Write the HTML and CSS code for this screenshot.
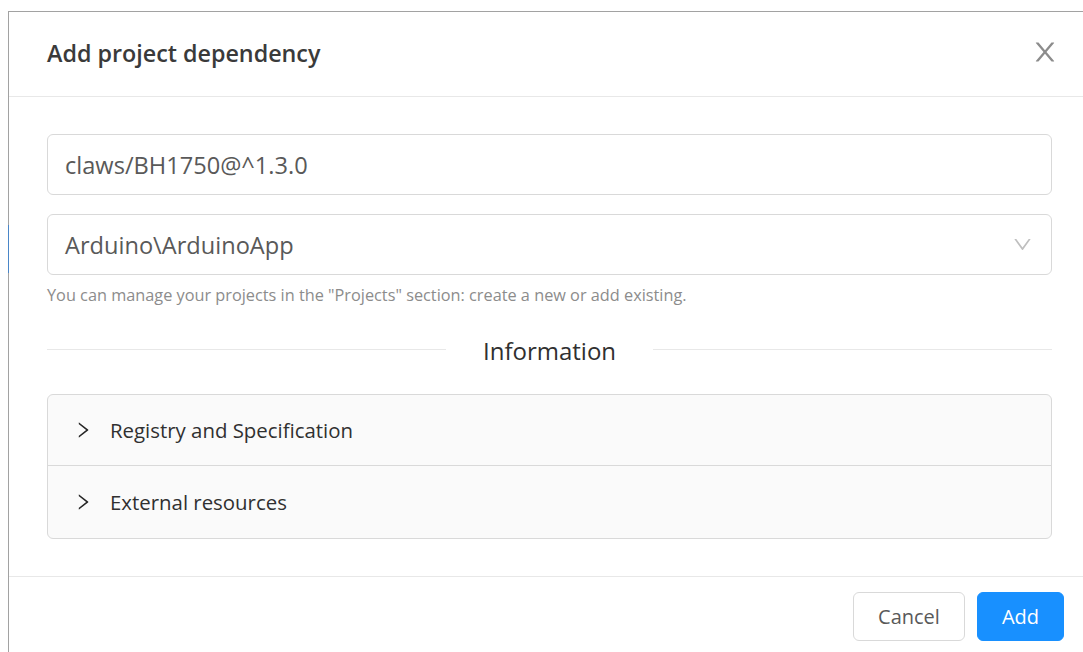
FILE: index.html
```html
<!DOCTYPE html>
<html lang="en">
<head>
<meta charset="utf-8">
<title>Add project dependency</title>
<link rel="stylesheet" href="styles.css">
</head>
<body>
<div class="modal">
  <div class="modal-header">
    <div class="modal-title">Add project dependency</div>
    <button class="modal-close" type="button" aria-label="Close">
      <svg viewBox="64 64 896 896" width="26" height="26" fill="currentColor"><path d="M563.8 512l262.5-312.9c4.4-5.2.7-13.1-6.1-13.1h-79.8c-4.7 0-9.2 2.1-12.3 5.7L511.6 449.8 295.1 191.7c-3-3.6-7.5-5.7-12.3-5.7H203c-6.8 0-10.5 7.9-6.1 13.1L459.4 512 196.9 824.9A7.95 7.95 0 00203 838h79.8c4.7 0 9.2-2.1 12.3-5.7l216.5-258.1 216.5 258.1c3 3.6 7.5 5.7 12.3 5.7h79.8c6.8 0 10.5-7.9 6.1-13.1L563.8 512z"/></svg>
    </button>
  </div>

  <div class="modal-body">
    <div class="field">
      <div class="input">claws/BH1750@^1.3.0</div>
    </div>

    <div class="field">
      <div class="input select">
        <span>Arduino\ArduinoApp</span>
        <svg class="select-arrow" viewBox="64 64 896 896" width="19" height="19" fill="currentColor"><path d="M884 256h-75c-5.1 0-9.9 2.5-12.9 6.6L512 654.2 227.9 262.6c-3-4.1-7.8-6.6-12.9-6.6h-75c-6.5 0-10.3 7.4-6.5 12.7l352.6 486.1c12.8 17.6 39 17.6 51.7 0l352.6-486.1c3.9-5.3.1-12.7-6.4-12.7z"/></svg>
      </div>
      <div class="help">You can manage your projects in the "Projects" section: create a new or add existing.</div>
    </div>

    <div class="divider"><span>Information</span></div>

    <div class="collapse">
      <div class="collapse-item">
        <svg class="collapse-arrow" viewBox="64 64 896 896" width="18" height="18" fill="currentColor"><path d="M765.7 486.8L314.9 134.7A7.97 7.97 0 00302 141v77.3c0 4.9 2.3 9.6 6.1 12.6l360 281.1-360 281.1c-3.9 3-6.1 7.7-6.1 12.6V883c0 6.7 7.7 10.4 12.9 6.3l450.8-352.1a31.96 31.96 0 000-50.4z"/></svg>
        <span>Registry and Specification</span>
      </div>
      <div class="collapse-item">
        <svg class="collapse-arrow" viewBox="64 64 896 896" width="18" height="18" fill="currentColor"><path d="M765.7 486.8L314.9 134.7A7.97 7.97 0 00302 141v77.3c0 4.9 2.3 9.6 6.1 12.6l360 281.1-360 281.1c-3.9 3-6.1 7.7-6.1 12.6V883c0 6.7 7.7 10.4 12.9 6.3l450.8-352.1a31.96 31.96 0 000-50.4z"/></svg>
        <span>External resources</span>
      </div>
    </div>
  </div>

  <div class="modal-footer">
    <button class="btn" type="button">Cancel</button>
    <button class="btn btn-primary" type="button">Add</button>
  </div>
</div>
</body>
</html>
```

FILE: styles.css
```css
html, body {
  margin: 0;
  padding: 0;
  background: #ffffff;
  overflow: hidden;
}

body {
  font-family: "Open Sans", "Noto Sans", sans-serif;
  color: rgba(0, 0, 0, 0.85);
  width: 1083px;
  height: 652px;
}

.modal {
  position: relative;
  margin: 11px 0 0 8px;
  width: 1082px;
  box-sizing: border-box;
  border-top: 1px solid #a2a2a2;
  border-left: 1px solid #a2a2a2;
  background: #fff;
}

/* sliver of the window behind showing through the frame */
.modal::before {
  content: "";
  position: absolute;
  left: -1px;
  top: 213px;
  width: 1px;
  height: 48px;
  background: #4a86c8;
}

.modal-header {
  display: flex;
  align-items: center;
  justify-content: space-between;
  height: 84px;
  padding: 0 32px 0 38px;
  border-bottom: 1px solid #e8e8e8;
}

.modal-title {
  font-size: 23.3px;
  font-weight: 600;
  color: #3a3a3a;
  margin-top: -2px;
}

.modal-close {
  border: 0;
  background: none;
  padding: 0;
  color: #8c8c8c;
  display: flex;
  margin-top: -4px;
}

.modal-body {
  padding: 37px 38px 37px 38px;
}

.field + .field {
  margin-top: 19px;
}

.input {
  height: 61px;
  box-sizing: border-box;
  border: 1px solid #d9d9d9;
  border-radius: 6px;
  padding: 0 17px;
  display: flex;
  align-items: center;
  font-size: 23.6px;
  color: #595959;
}

.select {
  justify-content: space-between;
}

.select-arrow {
  color: #bfbfbf;
  margin-right: 2px;
}

.help {
  font-size: 16.3px;
  color: #8c8c8c;
  margin-top: 9px;
  line-height: 22px;
}

.divider {
  display: flex;
  align-items: center;
  margin: 29px 0 27px;
  font-size: 24px;
  font-weight: 500;
  color: #303030;
  line-height: 32px;
}

.divider::before,
.divider::after {
  content: "";
  flex: 1;
  border-top: 1px solid #e8e8e8;
  transform: translateY(-2px);
}

.divider span {
  padding: 0 37px;
}

.collapse {
  background: #fafafa;
  border: 1px solid #d9d9d9;
  border-radius: 6px;
  overflow: hidden;
}

.collapse-item {
  display: flex;
  align-items: center;
  height: 70px;
  box-sizing: border-box;
  padding-left: 26px;
  font-size: 20.4px;
  color: #303030;
}

.collapse-item + .collapse-item {
  border-top: 1px solid #d9d9d9;
  height: 73px;
}

.collapse-arrow {
  margin-right: 18px;
  color: #262626;
}

.modal-footer {
  display: flex;
  justify-content: flex-end;
  gap: 12px;
  padding: 15px 26px 20px;
  border-top: 1px solid #e8e8e8;
}

.btn {
  height: 49px;
  box-sizing: border-box;
  border: 1px solid #d9d9d9;
  border-radius: 6px;
  background: #fff;
  color: #595959;
  font-family: inherit;
  font-size: 20px;
  padding: 0 24px;
}

.btn-primary {
  background: #1890ff;
  border-color: #1890ff;
  color: #fff;
}
```
